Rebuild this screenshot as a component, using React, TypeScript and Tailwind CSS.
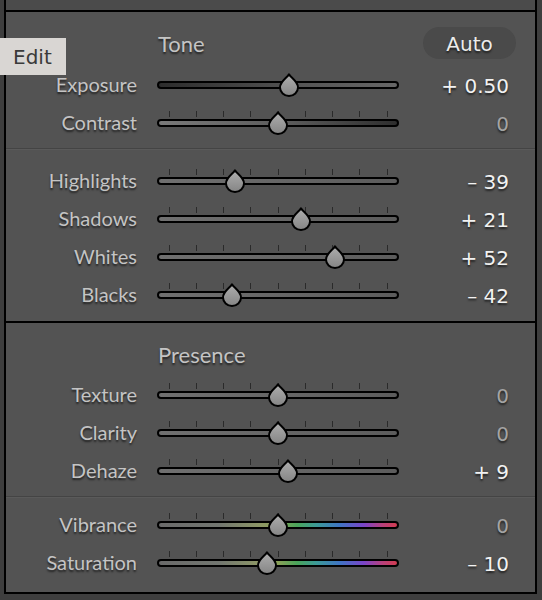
import React from "react";

type Row = { label: string; value: string; v: number; zero?: boolean; track: string; ticks?: boolean };

const GRAY = "bg-[linear-gradient(90deg,#707070,#5c5c5c)]";
const TONE_A: Row[] = [
  { label: "Exposure", value: "+ 0.50", v: 10, track: "bg-[linear-gradient(90deg,#2c2c2c,#555555_60%,#666666)]", ticks: false },
  { label: "Contrast", value: "0", v: 0, zero: true, track: "bg-[linear-gradient(90deg,#7a7a7a,#5a5a5a_55%,#2e2e2e)]" },
];
const TONE_B: Row[] = [
  { label: "Highlights", value: "– 39", v: -39, track: GRAY },
  { label: "Shadows", value: "+ 21", v: 21, track: GRAY },
  { label: "Whites", value: "+ 52", v: 52, track: GRAY },
  { label: "Blacks", value: "– 42", v: -42, track: GRAY },
];
const PRES_A: Row[] = [
  { label: "Texture", value: "0", v: 0, zero: true, track: GRAY },
  { label: "Clarity", value: "0", v: 0, zero: true, track: GRAY },
  { label: "Dehaze", value: "+ 9", v: 9, track: GRAY },
];
const COLOR =
  "bg-[linear-gradient(90deg,#6a6a6a_0%,#727670_25%,#8c9666_42%,#8aa058_50%,#4aa45a_58%,#3c9a96_66%,#3f74c4_76%,#7a44c8_86%,#b8407a_94%,#d23c50_100%)]";
const PRES_B: Row[] = [
  { label: "Vibrance", value: "0", v: 0, zero: true, track: COLOR },
  { label: "Saturation", value: "– 10", v: -10, track: COLOR },
];

const TICKS = [0, 1, 2, 3, 4, 5, 6, 7, 8];
const DEJAVU = { fontFamily: "'DejaVu Sans', 'Liberation Sans', sans-serif" };

function Thumb({ left }: { left: number }) {
  return (
    <svg
      className="absolute top-1/2 -translate-y-1/2"
      style={{ left: left - 12, marginTop: 1 }}
      width="24"
      height="24"
      viewBox="0 0 24 24"
    >
      <defs>
        <linearGradient id="tg" x1="0" y1="0" x2="0" y2="1">
          <stop offset="0" stopColor="#aeaeae" />
          <stop offset="1" stopColor="#858585" />
        </linearGradient>
      </defs>
      <path
        d="M12 1.3 C13.8 4.8 21 8.3 21 14.5 A9 8.5 0 0 1 3 14.5 C3 8.3 10.2 4.8 12 1.3 Z"
        fill="url(#tg)"
        stroke="#000"
        strokeWidth="2"
        strokeLinejoin="round"
      />
    </svg>
  );
}

function SliderRow({ r }: { r: Row }) {
  const center = 121 + r.v * 1.1;
  return (
    <div className="flex h-[38px] items-center">
      <div className="w-[131px] text-right text-[20px] leading-none text-[#c4c4c4] [text-shadow:0_2px_2px_rgba(0,0,0,0.6)]">
        {r.label}
      </div>
      <div className="relative ml-[20px] flex h-[38px] w-[242px] items-center pt-[2px]">
        <div className={`h-[8px] w-full rounded-full border-2 border-black ${r.track}`} />
        {r.ticks !== false &&
          TICKS.map((i) => (
            <div
              key={i}
              className="absolute top-[8px] h-[6px] w-px bg-[#2a2a2a]"
              style={{ left: 12 + i * 27.25 - 0.5 }}
            />
          ))}
        <Thumb left={center} />
      </div>
      <div
        className={`flex-1 translate-y-[2px] pr-[26px] text-right text-[20px] leading-none [text-shadow:0_2px_2px_rgba(0,0,0,0.6)] ${
          r.zero ? "text-[#a4a4a4]" : "text-[#f2f2f2]"
        }`}
        style={DEJAVU}
      >
        {r.value}
      </div>
    </div>
  );
}

function Divider() {
  return (
    <div className="flex flex-col">
      <div className="h-px bg-[#444444]" />
      <div className="h-px bg-[#5a5a5a]" />
    </div>
  );
}

export default function App() {
  return (
    <div
      className="relative h-[600px] w-[542px] overflow-hidden bg-[#3e3e3e]"
      style={{ fontFamily: "Lato, 'Noto Sans', sans-serif" }}
    >
      <div className="ml-[4px] flex h-[594px] w-[533px] flex-col border-x-2 border-black">
        <div className="h-[10px] bg-[#4b4b4b]" />
        <div className="h-[2px] bg-black" />
        <section className="flex h-[309px] flex-col bg-[#535353]">
          <div className="mb-[4px] mt-[15px] flex h-[34px] items-center justify-between">
            <span className="pl-[152px] text-[22px] leading-none text-[#c4c4c4] [text-shadow:0_2px_2px_rgba(0,0,0,0.6)]">
              Tone
            </span>
            <span
              className="mr-[19px] flex h-[32px] w-[93px] -translate-y-[1px] items-center justify-center rounded-full bg-[#4a4a4a] pt-[2px] text-[20px] leading-none text-[#ececec] [text-shadow:0_2px_2px_rgba(0,0,0,0.6)]"
              style={DEJAVU}
            >
              Auto
            </span>
          </div>
          {TONE_A.map((r) => (
            <SliderRow key={r.label} r={r} />
          ))}
          <div className="mb-[11px] mt-[7px]">
            <Divider />
          </div>
          {TONE_B.map((r) => (
            <SliderRow key={r.label} r={r} />
          ))}
        </section>
        <div className="h-[2px] bg-black" />
        <section className="flex flex-1 flex-col bg-[#535353]">
          <div className="mb-[6px] mt-[18px] flex h-[28px] items-center">
            <span className="pl-[152px] text-[22px] leading-none text-[#c4c4c4] [text-shadow:0_2px_2px_rgba(0,0,0,0.6)]">
              Presence
            </span>
          </div>
          {PRES_A.map((r) => (
            <SliderRow key={r.label} r={r} />
          ))}
          <div className="mb-[7px] mt-[7px]">
            <Divider />
          </div>
          {PRES_B.map((r) => (
            <SliderRow key={r.label} r={r} />
          ))}
        </section>
        <div className="h-[2px] bg-black" />
      </div>
      <div
        className="absolute left-0 top-[38px] flex h-[37px] w-[66px] items-center bg-[#d9d6d3] pl-[13px] text-[20px] leading-none text-[#3a3a3a]"
        style={DEJAVU}
      >
        Edit
      </div>
    </div>
  );
}
